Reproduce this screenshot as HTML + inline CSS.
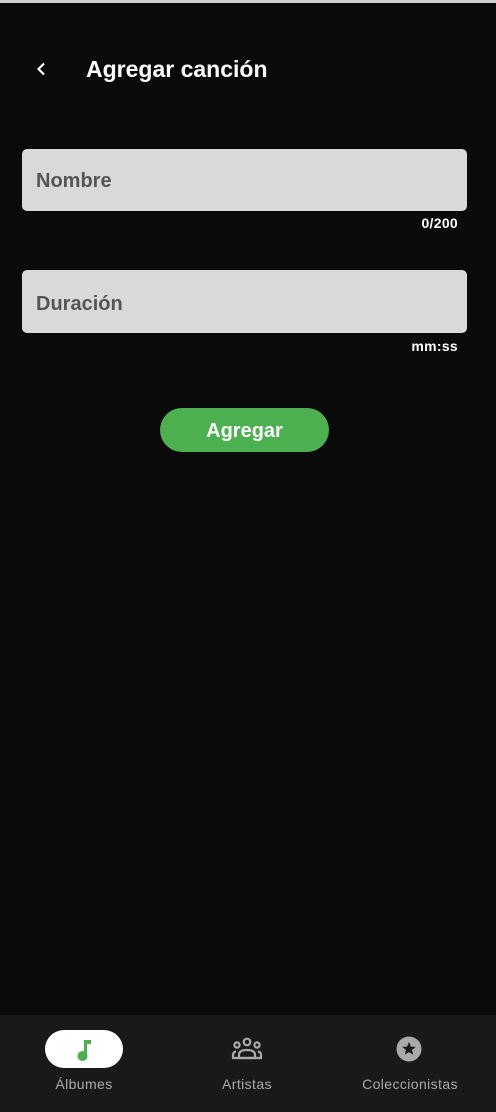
<!DOCTYPE html>
<html><head><meta charset="utf-8">
<style>
*{margin:0;padding:0;box-sizing:border-box}
body{width:496px;height:1112px;background:#0a0a0a;font-family:"Liberation Sans",sans-serif;position:relative;overflow:hidden;color:#fff}
.top{position:absolute;left:0;top:0;width:496px;height:3px;background:#cfcfcf}
.title{position:absolute;left:86px;top:56px;font-size:23px;font-weight:bold;color:#fff}
.back{position:absolute;left:35px;top:61px}
.field{position:absolute;left:22px;width:445px;background:#d9d9d9;border-radius:5px}
.field span{position:absolute;left:14px;font-size:20px;font-weight:bold;color:#555}
.helper{position:absolute;right:38px;font-size:14px;font-weight:bold;color:#fff;letter-spacing:0.3px}
.btn{position:absolute;left:160px;top:408px;width:169px;height:44px;background:#4caf50;border-radius:22px;text-align:center;line-height:46px;font-size:20px;font-weight:bold;color:#fff}
.nav{position:absolute;left:0;top:1015px;width:496px;height:97px;background:#191919}
.lbl{position:absolute;top:1076px;font-size:14px;color:#aaa;text-align:center;letter-spacing:0.4px;font-weight:500}
.pill{position:absolute;left:45px;top:1030px;width:78px;height:38px;background:#fff;border-radius:19px}
</style></head><body>
<div class="top"></div>
<svg class="back" width="12" height="16" viewBox="0 0 12 16"><path d="M9 2.5 L3.5 8 L9 13.5" stroke="#fff" stroke-width="2.2" fill="none"/></svg>
<div class="title">Agregar canción</div>

<div class="field" style="top:149px;height:62px"><span style="top:21px">Nombre</span></div>
<div class="helper" style="top:215px">0/200</div>
<div class="field" style="top:270px;height:63px"><span style="top:23px">Duración</span></div>
<div class="helper" style="top:338px">mm:ss</div>

<div class="btn">Agregar</div>

<div class="nav"></div>
<div class="pill"></div>
<svg style="position:absolute;left:74px;top:1037px" width="20" height="24" viewBox="0 0 20 24">
<rect x="10" y="3" width="3" height="16" fill="#4caf50"/><rect x="10" y="3" width="7" height="4" fill="#4caf50"/><circle cx="8.5" cy="19" r="5" fill="#4caf50"/></svg>
<div class="lbl" style="left:45px;width:78px">Álbumes</div>

<svg style="position:absolute;left:231px;top:1037px" width="32" height="24" viewBox="0 0 32 24" fill="none" stroke="#aaa" stroke-width="2.2">
<circle cx="16" cy="5" r="3.3"/><circle cx="6" cy="8" r="2.6"/><circle cx="26" cy="8" r="2.6"/>
<path d="M8 21 V18 Q8 13 16 13 Q24 13 24 18 V21 Z"/><path d="M2 21 V18 Q2 15 5 14.5"/><path d="M30 21 V18 Q30 15 27 14.5"/><path d="M1 21 H31"/></svg>
<div class="lbl" style="left:200px;width:94px">Artistas</div>

<svg style="position:absolute;left:396px;top:1036px" width="26" height="26" viewBox="0 0 26 26">
<circle cx="13" cy="13" r="12.5" fill="#aaa"/>
<path d="M13 6 L14.9 10.6 L19.8 10.9 L16 14 L17.3 18.8 L13 16.1 L8.7 18.8 L10 14 L6.2 10.9 L11.1 10.6 Z" fill="#191919"/></svg>
<div class="lbl" style="left:350px;width:120px">Coleccionistas</div>
</body></html>
